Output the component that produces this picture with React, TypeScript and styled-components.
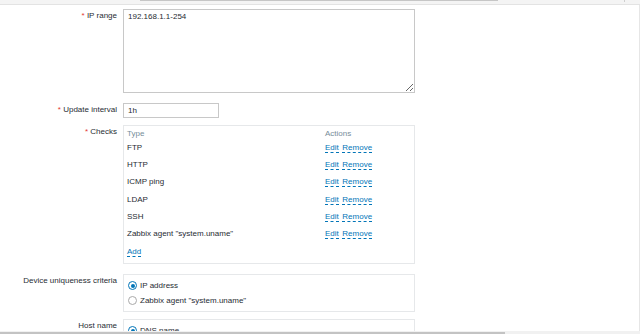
import React from "react";
import styled, { createGlobalStyle } from "styled-components";

const GlobalStyle = createGlobalStyle`
  html, body {
    margin: 0;
    padding: 0;
    background: #fff;
    overflow: hidden;
  }
  body {
    font-family: "Liberation Sans", Arial, sans-serif;
    font-size: 8px;
    color: #1f2c33;
  }
`;

const Page = styled.div`
  width: 640px;
  height: 334px;
  display: flex;
  flex-direction: column;
`;

const TopBar = styled.div`
  height: 4px;
  flex-shrink: 0;
  display: flex;
  align-items: flex-start;
  background: #f4f4f4;
  border-bottom: 1px solid #e3e3e3;
`;

const TopThumb = styled.div`
  margin-left: 140px;
  width: 358px;
  height: 1px;
  background: #c6c6c6;
`;

const TopTick = styled.div`
  margin-left: auto;
  margin-right: 15px;
  width: 1px;
  height: 2px;
  background: #cfcfcf;
`;

const Main = styled.div`
  flex: 1;
  min-height: 0;
  overflow: hidden;
  border-right: 1px solid #e6e6e6;
`;

const FormList = styled.div`
  padding-top: 4px;
  display: flex;
  flex-direction: column;
`;

const Row = styled.div<{ $space?: number }>`
  display: grid;
  grid-template-columns: 117px 292px;
  column-gap: 6px;
  margin-bottom: ${(p) => p.$space ?? 7}px;
`;

const Label = styled.div`
  text-align: right;
  padding-top: 2px;
  line-height: 10px;
  white-space: nowrap;
`;

const Req = styled.span`
  color: #e33734;
`;

const TextArea = styled.textarea`
  box-sizing: border-box;
  width: 292px;
  height: 84px;
  margin: 0;
  padding: 2px 4px;
  border: 1px solid #c8c8c8;
  font: inherit;
  line-height: 10px;
  color: #1f2c33;
  resize: vertical;
  outline: none;
`;

const TextInput = styled.input`
  box-sizing: border-box;
  width: 96px;
  height: 15px;
  margin: 0;
  padding: 0 4px;
  border: 1px solid #c8c8c8;
  font: inherit;
  color: #1f2c33;
  outline: none;
`;

const Box = styled.div`
  border: 1px solid #e6e8ea;
  padding: 3px 4px 3px 3px;
`;

const CheckRow = styled.div<{ $head?: boolean }>`
  display: grid;
  grid-template-columns: 198px 1fr;
  align-items: center;
  height: ${(p) => (p.$head ? 10 : 17.33)}px;
  line-height: 10px;
  color: ${(p) => (p.$head ? "#768d99" : "#1f2c33")};
  white-space: nowrap;
`;

const Link = styled.span`
  color: #0275b8;
  border-bottom: 1px dashed #0275b8;
  margin-right: 3.5px;
  cursor: pointer;
`;

const RadioBox = styled.div`
  border: 1px solid #e6e8ea;
  padding: 3px 4px;
`;

const RadioRow = styled.div`
  display: flex;
  align-items: center;
  gap: 3px;
  height: 15px;
  line-height: 10px;
  white-space: nowrap;
`;

const Radio = styled.span<{ $on?: boolean }>`
  box-sizing: border-box;
  width: 9px;
  height: 9px;
  border-radius: 50%;
  border: 1px solid ${(p) => (p.$on ? "#0275b8" : "#a9a9a9")};
  background: #fff;
  display: inline-flex;
  align-items: center;
  justify-content: center;
  flex-shrink: 0;

  &::after {
    content: "";
    width: 4px;
    height: 4px;
    border-radius: 50%;
    background: ${(p) => (p.$on ? "#0275b8" : "transparent")};
  }
`;

const BottomBar = styled.div`
  height: 3px;
  flex-shrink: 0;
  display: flex;
  align-items: flex-end;
  background: #f1f1f1;
`;

const BottomThumb = styled.div`
  width: 505px;
  height: 2px;
  background: #c3c3c3;
`;

const checks = ["FTP", "HTTP", "ICMP ping", "LDAP", "SSH", 'Zabbix agent "system.uname"'];

const App = () => {
  return (
    <Page>
      <GlobalStyle />
      <TopBar>
        <TopThumb />
        <TopTick />
      </TopBar>
      <Main>
        <FormList>
          <Row $space={8}>
            <Label>
              <Req>*</Req> IP range
            </Label>
            <div>
              <TextArea defaultValue="192.168.1.1-254" spellCheck={false} />
            </div>
          </Row>
          <Row $space={7}>
            <Label>
              <Req>*</Req> Update interval
            </Label>
            <div>
              <TextInput defaultValue="1h" />
            </div>
          </Row>
          <Row $space={10}>
            <Label>
              <Req>*</Req> Checks
            </Label>
            <Box>
              <CheckRow $head>
                <span>Type</span>
                <span>Actions</span>
              </CheckRow>
              {checks.map((name) => (
                <CheckRow key={name}>
                  <span>{name}</span>
                  <span>
                    <Link>Edit</Link>
                    <Link>Remove</Link>
                  </span>
                </CheckRow>
              ))}
              <CheckRow>
                <span>
                  <Link>Add</Link>
                </span>
              </CheckRow>
            </Box>
          </Row>
          <Row $space={7}>
            <Label>Device uniqueness criteria</Label>
            <RadioBox>
              <RadioRow>
                <Radio $on />
                IP address
              </RadioRow>
              <RadioRow>
                <Radio />
                Zabbix agent "system.uname"
              </RadioRow>
            </RadioBox>
          </Row>
          <Row>
            <Label>Host name</Label>
            <RadioBox>
              <RadioRow>
                <Radio $on />
                DNS name
              </RadioRow>
            </RadioBox>
          </Row>
        </FormList>
      </Main>
      <BottomBar>
        <BottomThumb />
      </BottomBar>
    </Page>
  );
};

export default App;
